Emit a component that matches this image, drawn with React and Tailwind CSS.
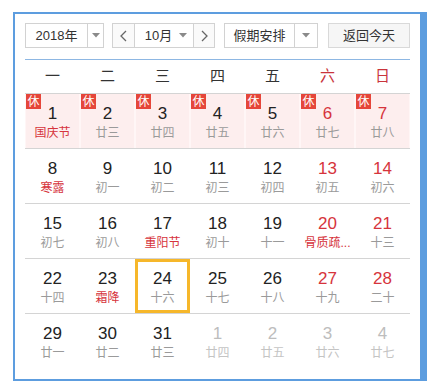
import { Fragment } from "react";

const WEEK = ["一", "二", "三", "四", "五", "六", "日"];

// [day, lunar, flags] flags: h=holiday lunar red, w=weekend, o=other month, r=rest(休), s=selected
const ROWS = [
  [
    [1, "国庆节", "hr"],
    [2, "廿三", "r"],
    [3, "廿四", "r"],
    [4, "廿五", "r"],
    [5, "廿六", "r"],
    [6, "廿七", "wr"],
    [7, "廿八", "wr"],
  ],
  [
    [8, "寒露", "h"],
    [9, "初一", ""],
    [10, "初二", ""],
    [11, "初三", ""],
    [12, "初四", ""],
    [13, "初五", "w"],
    [14, "初六", "w"],
  ],
  [
    [15, "初七", ""],
    [16, "初八", ""],
    [17, "重阳节", "h"],
    [18, "初十", ""],
    [19, "十一", ""],
    [20, "骨质疏...", "hw"],
    [21, "十三", "w"],
  ],
  [
    [22, "十四", ""],
    [23, "霜降", "h"],
    [24, "十六", "s"],
    [25, "十七", ""],
    [26, "十八", ""],
    [27, "十九", "w"],
    [28, "二十", "w"],
  ],
  [
    [29, "廿一", ""],
    [30, "廿二", ""],
    [31, "廿三", ""],
    [1, "廿四", "o"],
    [2, "廿五", "o"],
    [3, "廿六", "o"],
    [4, "廿七", "o"],
  ],
];

function Caret() {
  return (
    <svg width="8" height="5" viewBox="0 0 8 5">
      <path d="M0 0 L8 0 L4 4.5 Z" fill="#8a8a8a" />
    </svg>
  );
}

function Chevron({ dir }) {
  return (
    <svg width="7" height="12" viewBox="0 0 7 12">
      <path
        d={dir === "left" ? "M6 1 L1 6 L6 11" : "M1 1 L6 6 L1 11"}
        fill="none"
        stroke="#666"
        strokeWidth="1.3"
      />
    </svg>
  );
}

function DayCell({ day, lunar, flags }) {
  const rest = flags.includes("r");
  const other = flags.includes("o");
  const weekend = flags.includes("w");
  const holiday = flags.includes("h");
  const selected = flags.includes("s");

  let numColor = "text-[#222]";
  if (weekend) numColor = "text-[#d6343c]";
  if (other) numColor = "text-[#bdbdbd]";

  let lunarColor = "text-[#9a9a9a]";
  if (holiday) lunarColor = "text-[#d6343c]";
  if (other) lunarColor = "text-[#c4c4c4]";

  return (
    <div
      className={`relative flex h-[54px] flex-col items-center ${
        rest ? "bg-[#fdeeee] border-x border-[#fff6f6]" : ""
      } ${selected ? "border-[3px] border-[#f6b72a]" : ""}`}
    >
      {rest && (
        <span className="absolute left-0 top-0 flex h-[15px] w-[15px] items-center justify-center bg-[#e5463a] text-[12px] leading-none text-white">
          休
        </span>
      )}
      <span
        className={`${selected ? "mt-[7px]" : "mt-[10px]"} text-[17px] leading-[20px] ${numColor}`}
      >
        {day}
      </span>
      <span className={`mt-[1px] whitespace-nowrap text-center text-[12px] leading-[16px] ${lunarColor}`}>
        {lunar}
      </span>
    </div>
  );
}

export default function App() {
  return (
    <div
      className="bg-white pl-[13px] pt-[12px]"
      style={{ fontFamily: '"Liberation Sans", "Noto Sans CJK SC", sans-serif' }}
    >
      <div className="w-[414px] border-y-2 border-l-2 border-r-[7px] border-[#5d9ddf] bg-white px-[10px] pb-[11px] pt-[9px]">
        {/* toolbar */}
        <div className="flex h-[25px] items-stretch text-[13px] text-[#333]">
          <div className="flex w-[79px] border border-[#d2d2d2]">
            <span className="flex flex-1 items-center justify-center">2018年</span>
            <span className="flex w-[16px] items-center justify-center border-l border-[#d2d2d2]">
              <Caret />
            </span>
          </div>

          <div className="ml-[8px] flex w-[103px] border border-[#d2d2d2]">
            <span className="flex w-[22px] items-center justify-center border-r border-[#d2d2d2] bg-[#fafafa]">
              <Chevron dir="left" />
            </span>
            <span className="flex flex-1 items-center justify-center gap-[7px] pl-[4px]">
              10月
              <Caret />
            </span>
            <span className="flex w-[21px] items-center justify-center border-l border-[#d2d2d2] bg-[#fafafa]">
              <Chevron dir="right" />
            </span>
          </div>

          <div className="ml-[9px] flex w-[94px] border border-[#d2d2d2]">
            <span className="flex flex-1 items-center justify-center">假期安排</span>
            <span className="flex w-[23px] items-center justify-center border-l border-[#d2d2d2]">
              <Caret />
            </span>
          </div>

          <button className="ml-[10px] flex w-[82px] items-center justify-center border border-[#d9d9d9] bg-[#f6f6f6] text-[13px] text-[#333]">
            返回今天
          </button>
        </div>

        <div className="mt-[11px] h-px bg-[#8db7e3]" />

        {/* week header */}
        <div className="grid h-[33px] grid-cols-7 items-center text-center text-[15px]">
          {WEEK.map((w, i) => (
            <span key={w} className={i >= 5 ? "text-[#c9343c]" : "text-[#333]"}>
              {w}
            </span>
          ))}
        </div>

        {/* days */}
        {ROWS.map((row, ri) => (
          <div key={ri} className="grid grid-cols-7 border-t border-[#d4d4d4]">
            {row.map(([day, lunar, flags], ci) => (
              <Fragment key={ci}>
                <DayCell day={day} lunar={lunar} flags={flags} />
              </Fragment>
            ))}
          </div>
        ))}
      </div>
    </div>
  );
}
